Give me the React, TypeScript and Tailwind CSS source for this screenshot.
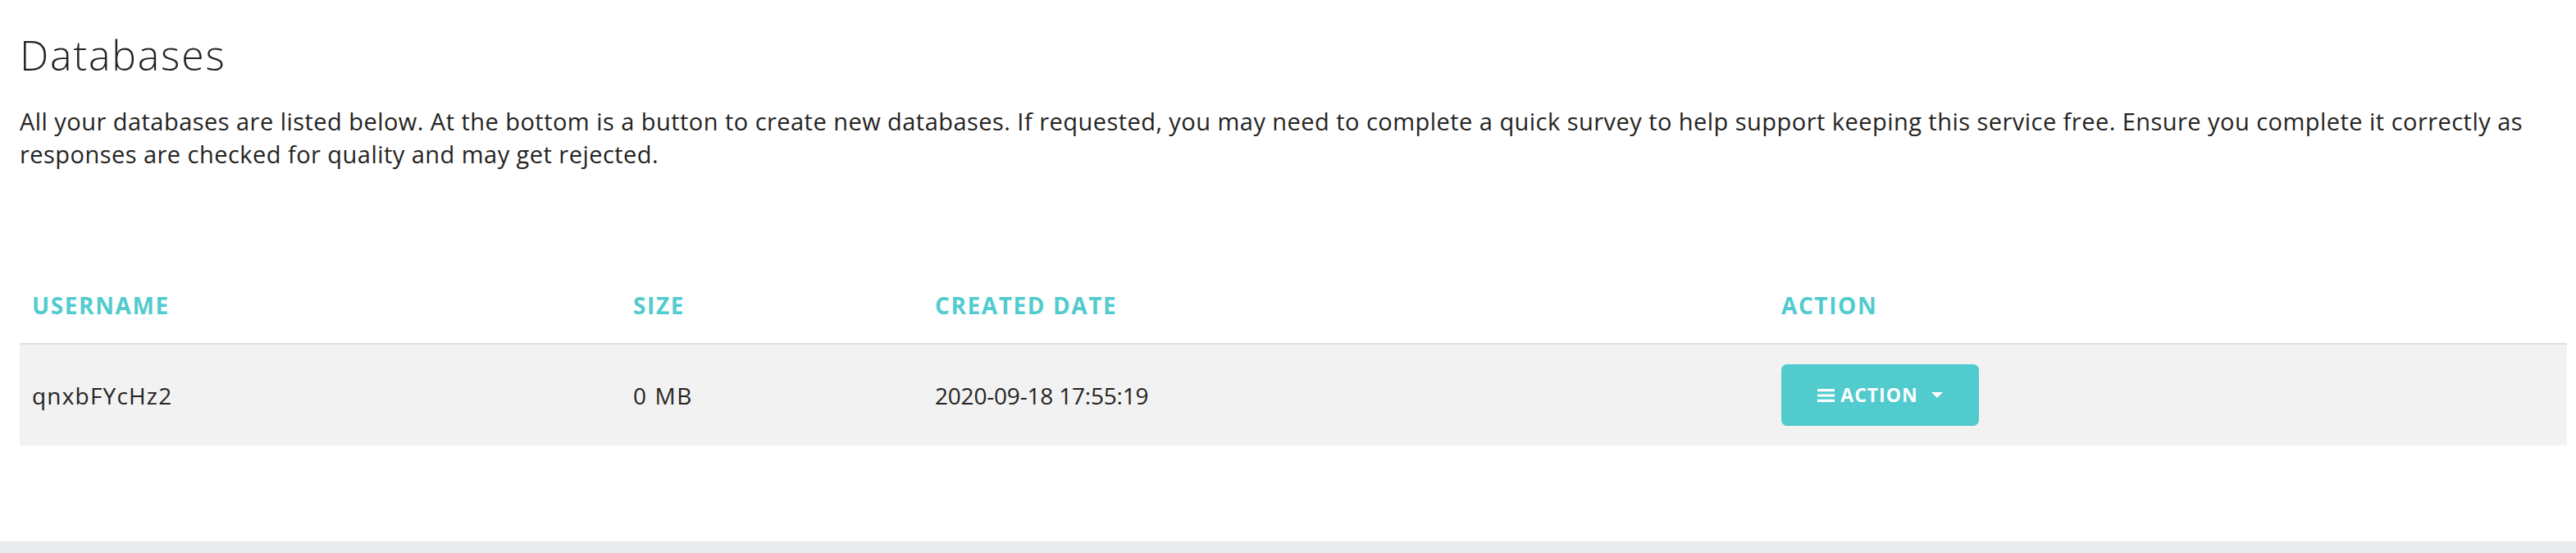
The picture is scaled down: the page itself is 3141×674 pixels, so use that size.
import React from 'react';

const rows = [
  { username: 'qnxbFYcHz2', size: '0 MB', created: '2020-09-18 17:55:19' },
];

const BarsIcon = () => (
  <svg width="21" height="16" viewBox="0 0 21 16" fill="currentColor">
    <rect x="0" y="0" width="21" height="3.2" rx="0.5" />
    <rect x="0" y="6.4" width="21" height="3.2" rx="0.5" />
    <rect x="0" y="12.8" width="21" height="3.2" rx="0.5" />
  </svg>
);

const Caret = () => (
  <svg width="14" height="7" viewBox="0 0 14 7" fill="currentColor">
    <polygon points="0,0 14,0 7,7" />
  </svg>
);

const App: React.FC = () => {
  const cols = 'grid grid-cols-[733px_368px_1032px_1fr]';

  return (
    <div className="min-h-[674px] bg-white text-[#252422] font-['Open_Sans',sans-serif] flex flex-col">
      <div className="pl-[24px] pr-[11px] pt-[38px]">
        <h3 className="text-[50px] leading-[59px] font-light tracking-[1.8px]">Databases</h3>
        <p className="mt-[31px] text-[29px] leading-[40px] tracking-[0.46px]">
          All your databases are listed below. At the bottom is a button to create new databases. If requested, you may
          need to complete a quick survey to help support keeping this service free. Ensure you complete it correctly as
          responses are checked for quality and may get rejected.
        </p>

        {/* Table */}
        <div className="mt-[144px]">
          <div className={`${cols} border-b-2 border-[#dee2e6] pb-[26px]`}>
            {['Username', 'Size', 'Created Date', 'Action'].map((h) => (
              <div key={h} className="px-[15px] text-[28px] leading-[40px] font-bold uppercase text-[#51cbce] tracking-[1.6px]">
                {h}
              </div>
            ))}
          </div>
          {rows.map((r) => (
            <div key={r.username} className={`${cols} h-[123px] items-center bg-[#f2f2f2]`}>
              <div className="px-[15px] text-[28px] leading-[40px] tracking-[1.2px]">{r.username}</div>
              <div className="px-[15px] text-[28px] leading-[40px] tracking-[1.6px]">{r.size}</div>
              <div className="px-[15px] text-[28px] leading-[40px] tracking-[-0.2px]">{r.created}</div>
              <div className="px-[15px]">
                <button className="w-[241px] h-[75px] rounded-[7px] bg-[#51cbce] text-white flex items-center justify-center">
                  <BarsIcon />
                  <span className="ml-[7px] text-[23px] font-bold tracking-[1px] leading-none">ACTION</span>
                  <span className="ml-[16px] flex">
                    <Caret />
                  </span>
                </button>
              </div>
            </div>
          ))}
        </div>
      </div>
      <div className="mt-auto h-[14px] bg-[#e9ecef]" />
    </div>
  );
};

export default App;
